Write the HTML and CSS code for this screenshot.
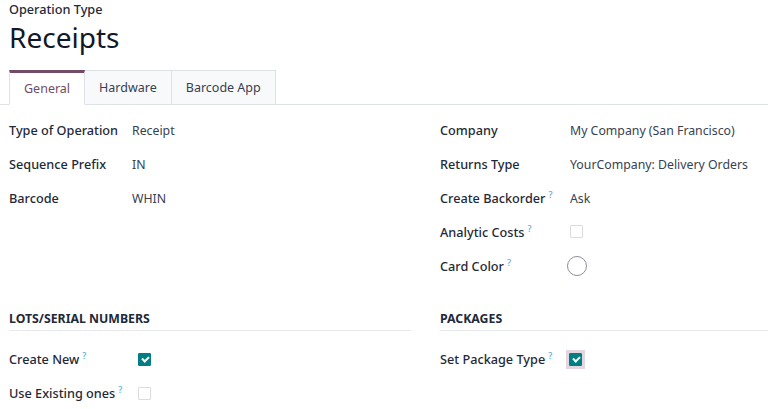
FILE: index.html
```html
<!DOCTYPE html>
<html lang="en">
<head>
<meta charset="utf-8">
<title>Receipts</title>
<link rel="stylesheet" href="styles.css">
</head>
<body>
<div class="sheet">
  <div class="title-block">
    <div class="model-label">Operation Type</div>
    <h1 class="record-name">Receipts</h1>
  </div>

  <ul class="tabs">
    <li class="tab active">General</li>
    <li class="tab">Hardware</li>
    <li class="tab">Barcode App</li>
  </ul>

  <div class="columns">
    <div class="group group-left">
      <div class="field"><span class="label">Type of Operation</span><span class="value">Receipt</span></div>
      <div class="field"><span class="label">Sequence Prefix</span><span class="value">IN</span></div>
      <div class="field"><span class="label">Barcode</span><span class="value">WHIN</span></div>
    </div>
    <div class="group group-right">
      <div class="field"><span class="label">Company</span><span class="value">My Company (San Francisco)</span></div>
      <div class="field"><span class="label">Returns Type</span><span class="value">YourCompany: Delivery Orders</span></div>
      <div class="field"><span class="label">Create Backorder<sup class="help">?</sup></span><span class="value">Ask</span></div>
      <div class="field"><span class="label">Analytic Costs<sup class="help">?</sup></span><span class="value"><span class="check"></span></span></div>
      <div class="field"><span class="label">Card Color<sup class="help">?</sup></span><span class="value"><span class="color-dot"></span></span></div>
    </div>
  </div>

  <div class="columns sections">
    <div class="section section-left">
      <div class="section-title">LOTS/SERIAL NUMBERS</div>
      <div class="field"><span class="label">Create New<sup class="help">?</sup></span><span class="value"><span class="check on"></span></span></div>
      <div class="field"><span class="label">Use Existing ones<sup class="help">?</sup></span><span class="value"><span class="check"></span></span></div>
    </div>
    <div class="section section-right">
      <div class="section-title">PACKAGES</div>
      <div class="field"><span class="label">Set Package Type<sup class="help">?</sup></span><span class="value"><span class="focus-ring"><span class="check on"></span></span></span></div>
    </div>
  </div>
</div>
</body>
</html>
```

FILE: styles.css
```css
* { box-sizing: border-box; }

html, body {
  margin: 0;
  padding: 0;
  background: #ffffff;
}

body {
  font-family: "Noto Sans", "Open Sans", sans-serif;
  font-size: 12.5px;
  color: #374151;
  overflow: hidden;
}

.sheet {
  width: 768px;
  height: 409px;
}

.title-block {
  padding: 1px 9px 0;
}

.model-label {
  font-size: 12.7px;
  font-weight: 500;
  color: #1f2937;
  line-height: 16px;
}

.record-name {
  margin: 2px 0 0;
  font-size: 28px;
  font-weight: 400;
  line-height: 36px;
  color: #111827;
}

.tabs {
  list-style: none;
  margin: 15px 0 0;
  padding: 0 0 0 9px;
  display: flex;
  border-bottom: 1px solid #dee2e6;
  height: 35px;
}

.tab {
  padding: 0 14px;
  line-height: 33px;
  height: 35px;
  margin-bottom: -1px;
  background: #f8f9fa;
  border: 1px solid #dee2e6;
  border-left: none;
  color: #374151;
}

.tab.active {
  background: #ffffff;
  color: #714b67;
  border-left: 1px solid #dee2e6;
  border-top: 3px solid #714b67;
  border-bottom-color: #ffffff;
  line-height: 31px;
  padding: 0 14px;
}

.columns {
  display: grid;
  grid-template-columns: 402px 1fr;
  column-gap: 29px;
  padding-left: 9px;
}

.group {
  padding-top: 8px;
}

.field {
  display: flex;
  align-items: center;
  height: 34px;
}

.label {
  font-weight: 500;
  font-size: 12.7px;
  color: #1f2937;
  flex: none;
}

.group-left .label { width: 123px; }
.group-right .label { width: 130px; }
.section .label { width: 129px; }
.section-right .label { width: 130px; }

.value {
  display: flex;
  align-items: center;
  font-size: 12.3px;
}

.help {
  color: #5aa9d6;
  font-size: 9px;
  font-weight: 500;
  margin-left: 3px;
  vertical-align: 5px;
  line-height: 0;
}

.check {
  display: inline-block;
  width: 13px;
  height: 13px;
  border: 1px solid #dcdcdc;
  border-radius: 1px;
  background: #ffffff;
  position: relative;
}

.group-right .check { margin-top: -2px; }

.check.on {
  background: #017e84;
  border-color: #017e84;
}

.check.on::after {
  content: "";
  position: absolute;
  left: 3px;
  top: 2px;
  width: 5px;
  height: 3px;
  border-left: 2px solid #ffffff;
  border-bottom: 2px solid #ffffff;
  transform: rotate(-45deg);
}

.focus-ring {
  display: inline-flex;
  padding: 3px;
  margin-left: -4px;
  background: #e4d6df;
}

.color-dot {
  display: inline-block;
  width: 20px;
  height: 20px;
  border: 1px solid #8a8f98;
  border-radius: 50%;
  margin-left: -3px;
}

.sections {
  margin-top: 28px;
}

.section-title {
  font-weight: 700;
  color: #1f2937;
  font-size: 12.3px;
  line-height: 16px;
  padding-bottom: 3px;
  border-bottom: 1px solid #e7e9ed;
  margin-bottom: 11px;
}
```
